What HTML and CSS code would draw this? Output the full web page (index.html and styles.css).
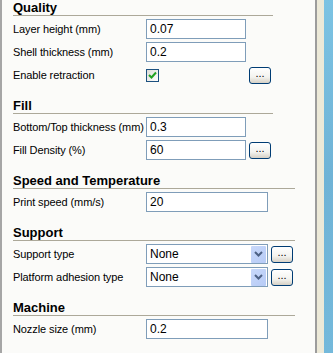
FILE: index.html
```html
<!DOCTYPE html>
<html lang="en">
<head>
    <meta charset="UTF-8">
    <meta name="viewport" content="width=device-width, initial-scale=1.0">
    <title>Print settings</title>
    <link rel="stylesheet" href="styles.css">
</head>
<body>
    <div class="panel">
        <!-- Quality -->
        <div class="section">
            <div class="section-head">Quality</div>
            <div class="row">
                <label>Layer height (mm)</label>
                <div class="field">0.07</div>
            </div>
            <div class="row">
                <label>Shell thickness (mm)</label>
                <div class="field">0.2</div>
            </div>
            <div class="row">
                <label>Enable retraction</label>
                <div class="check-cell">
                    <span class="checkbox">
                        <svg width="9" height="9" viewBox="0 0 9 9"><path d="M1 4 L3.5 6.5 L8 1.5" fill="none" stroke="#21a121" stroke-width="2"/></svg>
                    </span>
                </div>
                <button class="more">...</button>
            </div>
        </div>

        <!-- Fill -->
        <div class="section">
            <div class="section-head">Fill</div>
            <div class="row">
                <label>Bottom/Top thickness (mm)</label>
                <div class="field">0.3</div>
            </div>
            <div class="row">
                <label>Fill Density (%)</label>
                <div class="field">60</div>
                <button class="more">...</button>
            </div>
        </div>

        <!-- Speed -->
        <div class="section">
            <div class="section-head wide">Speed and Temperature</div>
            <div class="row">
                <label>Print speed (mm/s)</label>
                <div class="field wide">20</div>
            </div>
        </div>

        <!-- Support -->
        <div class="section">
            <div class="section-head wide">Support</div>
            <div class="row">
                <label>Support type</label>
                <div class="select">
                    <span>None</span>
                    <span class="arrow"><svg width="9" height="6" viewBox="0 0 9 6"><path d="M1 1 L4.5 4.5 L8 1" fill="none" stroke="#4d6185" stroke-width="2"/></svg></span>
                </div>
                <button class="more">...</button>
            </div>
            <div class="row">
                <label>Platform adhesion type</label>
                <div class="select">
                    <span>None</span>
                    <span class="arrow"><svg width="9" height="6" viewBox="0 0 9 6"><path d="M1 1 L4.5 4.5 L8 1" fill="none" stroke="#4d6185" stroke-width="2"/></svg></span>
                </div>
                <button class="more">...</button>
            </div>
        </div>

        <!-- Machine -->
        <div class="section">
            <div class="section-head wide">Machine</div>
            <div class="row">
                <label>Nozzle size (mm)</label>
                <div class="field wide">0.2</div>
            </div>
        </div>
    </div>
    <div class="sash"></div>
    <div class="view"></div>
</body>
</html>
```

FILE: styles.css
```css
body {
    margin: 0;
    padding: 0;
    height: 353px;
    display: flex;
    font-family: "Liberation Sans", Arial, sans-serif;
    font-size: 11px;
    color: #000;
    overflow: hidden;
}

.panel {
    width: 302px;
    padding-left: 11px;
    border-left: 2px solid #a6a6a6;
    background-color: #fbfbf9;
}

.sash {
    width: 7px;
    border-left: 2px solid #9c9c9c;
    background-color: #ece9d8;
}

.view {
    flex: 1;
    background: linear-gradient(160deg, #7cc3e3 0%, #6fb3d6 50%, #74b9db 100%);
}

.section {
    margin-bottom: 13px;
}

.section-head {
    width: 260px;
    height: 15px;
    line-height: 15px;
    font-size: 13px;
    font-weight: bold;
    border-bottom: 1px solid #aca899;
}

.section-head.wide {
    width: 282px;
}

.row {
    display: flex;
    align-items: center;
    height: 20px;
    margin-top: 3px;
}

.row label {
    width: 133px;
    white-space: nowrap;
    letter-spacing: -0.1px;
}

.field {
    box-sizing: border-box;
    width: 100px;
    height: 20px;
    line-height: 18px;
    padding-left: 3px;
    border: 1px solid #7f9db9;
    background-color: #fff;
    font-size: 12px;
}

.field.wide {
    width: 122px;
}

.check-cell {
    width: 100px;
    display: flex;
    align-items: center;
}

.checkbox {
    box-sizing: border-box;
    width: 13px;
    height: 13px;
    border: 1px solid #1c5180;
    background: linear-gradient(135deg, #dcdcd7 0%, #fff 100%);
    display: flex;
    align-items: center;
    justify-content: center;
}

.more {
    box-sizing: border-box;
    width: 22px;
    height: 17px;
    margin-left: 3px;
    padding: 0 0 4px 0;
    border: 1px solid #003c74;
    border-radius: 3px;
    background: linear-gradient(#ffffff 0%, #f3f3ef 60%, #d6d0c5 100%);
    font-family: "Liberation Sans", Arial, sans-serif;
    font-size: 11px;
    line-height: 11px;
    color: #000;
}

.select {
    box-sizing: border-box;
    width: 122px;
    height: 20px;
    padding: 1px 1px 1px 3px;
    border: 1px solid #7f9db9;
    background-color: #fff;
    display: flex;
    align-items: center;
    justify-content: space-between;
    font-size: 12px;
}

.arrow {
    width: 15px;
    height: 17px;
    background: linear-gradient(135deg, #c8d8fa 0%, #b7cbf6 100%);
    border-radius: 1px;
    display: flex;
    align-items: center;
    justify-content: center;
}
```
